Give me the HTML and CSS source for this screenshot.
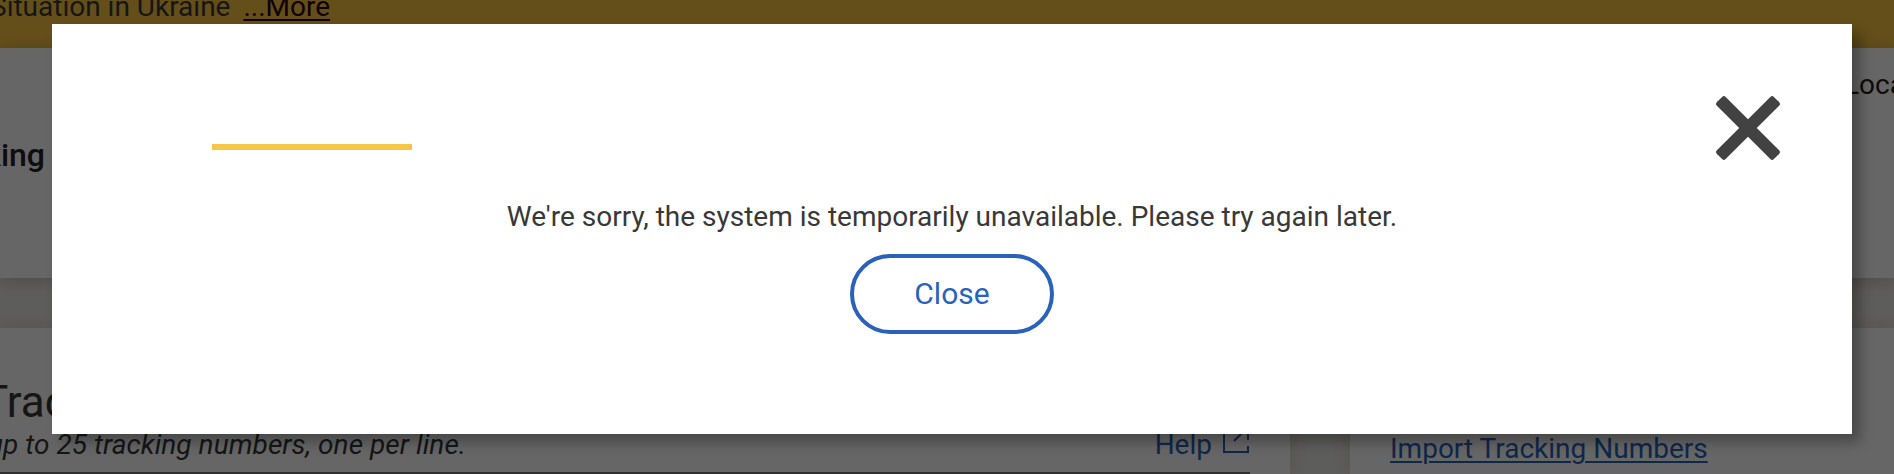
FILE: index.html
```html
<!DOCTYPE html>
<html lang="en">
<head>
    <meta charset="UTF-8">
    <meta name="viewport" content="width=device-width, initial-scale=1.0">
    <title>Tracking</title>
    <link rel="stylesheet" href="styles.css">
</head>
<body>
    <div class="page">
        <div class="alert-bar">
            <span class="alert-text">Situation in Ukraine</span>
            <a href="#" class="alert-more">...More</a>
        </div>

        <header class="header">
            <div class="brand">Tracking</div>
            <div class="locations">Locations</div>
        </header>

        <main class="content">
            <section class="card track-card">
                <h1>Track</h1>
                <div class="track-hint">
                    <em>up to 25 tracking numbers, one per line.</em>
                    <a href="#" class="help">
                        Help
                        <svg class="help-icon" width="28" height="28" viewBox="0 0 28 28">
                            <path d="M11 2H2v24h24v-6M26 14V2M17 2h9M12 15L25 2"/>
                        </svg>
                    </a>
                </div>
                <div class="track-input"></div>
            </section>
            <section class="card side-card">
                <a href="#">Import Tracking Numbers</a>
            </section>
        </main>
    </div>

    <div class="overlay">
        <div class="modal">
            <div class="modal-header">
                <div class="accent"></div>
                <svg class="modal-x" width="64" height="64" viewBox="-32 -32 64 64">
                    <rect x="-40.3" y="-6.2" width="80.6" height="12.4" rx="2.5" transform="rotate(45)"/>
                    <rect x="-40.3" y="-6.2" width="80.6" height="12.4" rx="2.5" transform="rotate(-45)"/>
                </svg>
            </div>
            <p class="message">We're sorry, the system is temporarily unavailable. Please try again later.</p>
            <button class="close-btn">Close</button>
        </div>
    </div>
</body>
</html>
```
FILE: styles.css
```css
* {
    box-sizing: border-box;
    margin: 0;
    padding: 0;
}
body {
    height: 474px;
    overflow: hidden;
    font-family: Roboto, sans-serif;
    font-size: 28px;
    line-height: 36px;
    color: #383838;
    background: #e9e8e3;
}
.page {
    height: 474px;
    overflow: hidden;
    white-space: nowrap;
}
.alert-bar {
    display: flex;
    gap: 13px;
    height: 48px;
    background: #f9c644;
}
.alert-text,
.alert-more {
    margin-top: -11px;
}
.alert-text {
    margin-left: -10px;
}
.alert-more {
    color: #2b0000;
    text-underline-offset: 3px;
    text-decoration-thickness: 2px;
}
.header {
    position: relative;
    display: flex;
    justify-content: space-between;
    height: 230px;
    background: #fff;
    box-shadow: 0 2px 16px rgba(0,0,0,0.2);
}
.brand {
    display: flex;
    justify-content: flex-end;
    width: 45px;
    padding-top: 89px;
    font-size: 32px;
    font-weight: 500;
    color: #242424;
}
.locations {
    width: 50px;
    padding-top: 19px;
    color: #222;
}
.content {
    display: flex;
    gap: 60px;
    padding-top: 50px;
}
.card {
    height: 146px;
    background: #fff;
    box-shadow: 0 0 16px rgba(0,0,0,0.12);
}
.track-card {
    width: 1290px;
    padding-right: 40px;
}
.track-card h1 {
    height: 99px;
    margin-left: -18px;
    padding-top: 47px;
    font-size: 44px;
    line-height: 54px;
    font-weight: 400;
}
.track-hint {
    display: flex;
    justify-content: space-between;
    height: 45px;
    margin-left: -12px;
}
.track-hint em {
    letter-spacing: 0.06px;
}
.help {
    display: flex;
    gap: 10px;
    color: #2a62b9;
    text-decoration: none;
}
.help-icon {
    margin-top: -1px;
    fill: none;
    stroke: #2a62b9;
    stroke-width: 2;
}
.track-input {
    height: 2px;
    background: #777;
}
.side-card {
    flex: 1;
    padding: 103px 0 0 40px;
}
.side-card a {
    color: #2a62b9;
    text-underline-offset: 3px;
    text-decoration-thickness: 2px;
}
.overlay {
    position: absolute;
    inset: 0;
    padding: 24px 42px 40px 52px;
    background: rgba(0,0,0,0.6);
}
.modal {
    display: flex;
    flex-direction: column;
    align-items: center;
    height: 410px;
    background: #fff;
    box-shadow: 8px 8px 12px rgba(0,0,0,0.3);
}
.modal-header {
    display: flex;
    justify-content: space-between;
    width: 100%;
    height: 175px;
    padding: 72px 72px 0 160px;
}
.accent {
    width: 200px;
    height: 6px;
    margin-top: 48px;
    background: #f7c644;
}
.modal-x {
    fill: #424242;
}
.message {
    margin-bottom: 19px;
}
.close-btn {
    width: 204px;
    height: 80px;
    padding-bottom: 2px;
    border: 4px solid #2a62b9;
    border-radius: 40px;
    background: #fff;
    color: #2a62b9;
    font-family: inherit;
    font-size: 30px;
}
```
